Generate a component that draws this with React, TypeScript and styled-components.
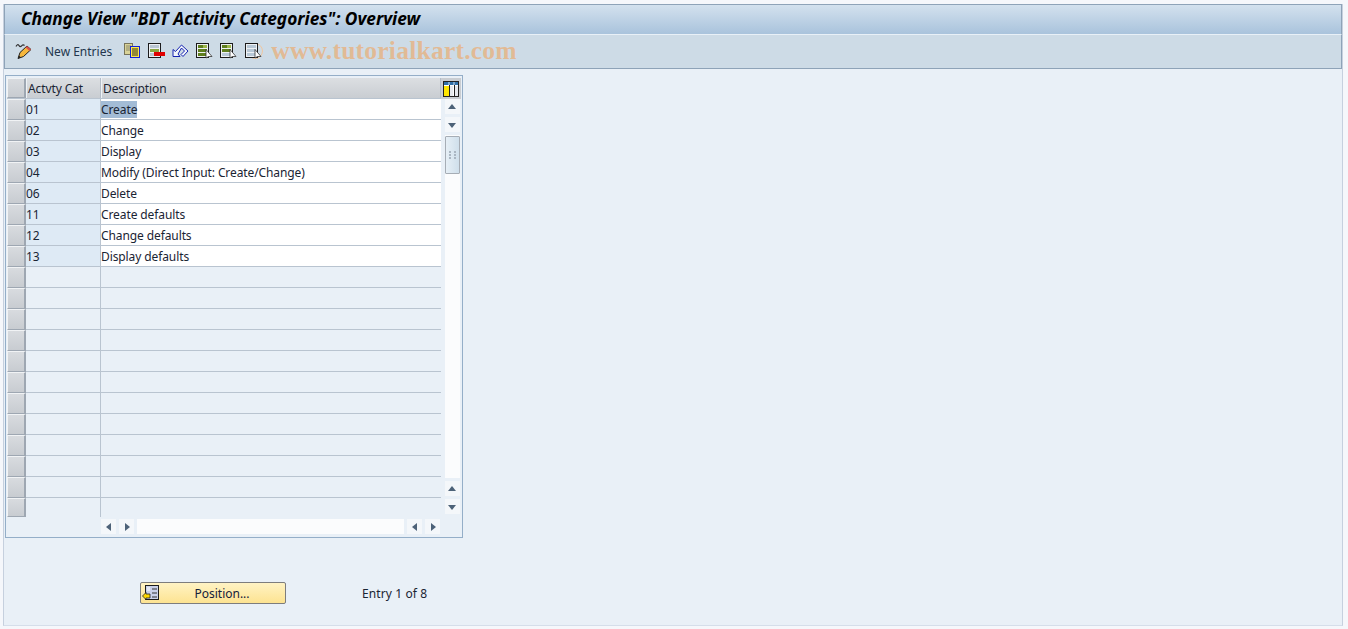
import React from 'react';
import styled, { createGlobalStyle } from 'styled-components';

const GlobalStyle = createGlobalStyle`
  html, body {
    margin: 0;
    padding: 0;
    background: #f5f7fb;
    overflow: hidden;
  }
`;

const Screen = styled.div`
  width: 1348px;
  height: 629px;
  box-sizing: border-box;
  padding: 4px 5px 4px 3px;
  font-family: "Noto Sans", "Liberation Sans", sans-serif;
  font-size: 12px;
  color: #1a2433;
`;
const Frame = styled.div`
  height: 100%;
  display: flex;
  flex-direction: column;
  background: #e9f0f7;
  border-right: 1px solid #c6d0de;
  border-left: 1px solid #c6d0de;
  border-bottom: 1px solid #d5deea;
`;
const TitleBar = styled.div`
  height: 31px;
  box-sizing: border-box;
  padding: 0 0 2px 16px;
  display: flex;
  align-items: center;
  border: 1px solid #8ea3b8;
  border-bottom: 1px solid #e8f0f7;
  background: linear-gradient(#d3e1ee, #a9c3dc);
`;
const Title = styled.h1`
  margin: 0;
  font-family: "Noto Sans", "Liberation Sans", sans-serif;
  font-size: 17.3px;
  font-weight: bold;
  font-style: italic;
  color: #000;
`;
const Toolbar = styled.div`
  height: 34px;
  box-sizing: border-box;
  padding: 0 0 1px 10px;
  display: flex;
  align-items: center;
  background: #cddbe6;
  border: 1px solid #8ea3b8;
  border-top: none;
`;
const ToolButton = styled.span<{ $gap?: number }>`
  display: flex;
  align-items: center;
  margin-right: ${props => props.$gap ?? 7}px;
  color: #23364d;
`;
const Watermark = styled.span`
  font-family: "Liberation Serif", serif;
  font-size: 25.6px;
  font-weight: bold;
  color: rgba(240, 165, 95, 0.6);
  letter-spacing: 0.2px;
  margin-left: 2px;
`;
const Content = styled.div`
  flex: 1;
  display: flex;
  flex-direction: column;
  padding: 6px 0 0 1px;
`;
const TableBox = styled.div`
  width: 458px;
  height: 463px;
  box-sizing: border-box;
  padding: 2px 2px 0 1px;
  border: 1px solid #94aec8;
  display: grid;
  grid-template-columns: 434px 20px;
  grid-template-rows: 21px 418px 20px;
  letter-spacing: -0.1px;
`;
const HeaderRow = styled.div`
  display: grid;
  grid-template-columns: 19px 75px 1fr;
  background: linear-gradient(#dcdfe2, #c9cdd2);
  border-bottom: 1px solid #b9c4d0;
`;
const HeaderCell = styled.div`
  padding-left: 1px;
  display: flex;
  align-items: center;
  border-left: 1px solid #eef2f6;
  border-right: 1px solid #b4bdc8;
`;
const Selector = styled.div`
  box-sizing: border-box;
  background: linear-gradient(#d8dbdf, #c8ccd1);
  border: 1px solid #f1f3f5;
  border-right: 2px solid #9ea7b2;
  border-bottom: 1px solid #9ea7b2;
`;
const ConfigButton = styled.div`
  display: flex;
  align-items: center;
  justify-content: center;
  background: #c9cdd2;
`;
const Rows = styled.div`
  display: flex;
  flex-direction: column;
`;
const Row = styled.div<{ $last?: boolean }>`
  height: ${props => (props.$last ? 19 : 21)}px;
  display: grid;
  grid-template-columns: 19px 75px 1fr;
`;
const KeyCell = styled.div<{ $filled: boolean; $last?: boolean }>`
  box-sizing: border-box;
  display: flex;
  align-items: center;
  background: ${props => (props.$filled ? '#deeaf5' : '#e9f0f7')};
  border-right: 1px solid #b9c4d0;
  border-bottom: ${props => (props.$last ? 'none' : '1px solid #b9c4d0')};
`;
const TextCell = styled.div<{ $filled: boolean; $last?: boolean }>`
  box-sizing: border-box;
  display: flex;
  align-items: center;
  background: ${props => (props.$filled ? '#fff' : '#e9f0f7')};
  border-bottom: ${props => (props.$last ? 'none' : '1px solid #b9c4d0')};
`;
const Marked = styled.span`
  background: #a3bcd6;
`;
const VerticalBar = styled.div`
  display: flex;
  flex-direction: column;
  align-items: center;
  padding: 0 1px 3px 3px;
`;
const ArrowButton = styled.div<{ $spaced?: boolean }>`
  width: 15px;
  height: 15px;
  flex: none;
  display: flex;
  align-items: center;
  justify-content: center;
  background: #f4f7fa;
  margin-top: ${props => (props.$spaced ? 3 : 0)}px;
`;
const VerticalTrack = styled.div`
  width: 15px;
  flex: 1;
  margin: 3px 0;
  background: #fbfcfd;
`;
const Thumb = styled.div`
  width: 15px;
  height: 38px;
  margin-top: 1px;
  box-sizing: border-box;
  display: flex;
  align-items: center;
  justify-content: center;
  background: linear-gradient(90deg, #e6eff6, #cfdfeb);
  border: 1px solid #a6adb5;
  border-radius: 1px;
`;
const HorizontalBar = styled.div`
  display: flex;
  align-items: center;
  gap: 3px;
  padding: 2px 1px 3px 94px;
`;
const HorizontalTrack = styled.div`
  height: 15px;
  flex: 1;
  background: #fbfcfd;
`;
const Footer = styled.div`
  display: flex;
  align-items: center;
  padding: 44px 0 0 135px;
`;
const PositionButton = styled.button`
  width: 146px;
  height: 22px;
  padding: 0 1px;
  display: flex;
  align-items: center;
  background: linear-gradient(#fff3c4, #fde391);
  border: 1px solid #7d7d7d;
  border-radius: 2px;
  font: inherit;
  color: #14213a;
`;
const PositionLabel = styled.span`
  flex: 1;
  text-align: center;
`;
const EntryCount = styled.span`
  margin-left: 76px;
  letter-spacing: 0.1px;
`;

const rows = [
  ['01', 'Create'],
  ['02', 'Change'],
  ['03', 'Display'],
  ['04', 'Modify (Direct Input: Create/Change)'],
  ['06', 'Delete'],
  ['11', 'Create defaults'],
  ['12', 'Change defaults'],
  ['13', 'Display defaults'],
  ...Array.from({ length: 12 }, () => ['', '']),
];

const Arrow = ({ dir }: { dir: 'up' | 'down' | 'left' | 'right' }) => {
  const points = {
    up: '1,7 9,7 5,2',
    down: '1,3 9,3 5,8',
    left: '7,1 7,9 2,5',
    right: '3,1 3,9 8,5',
  }[dir];
  return (
    <svg width="10" height="10" viewBox="0 0 10 10">
      <polygon points={points} fill="#4d6278" />
    </svg>
  );
};

const Pencil = () => (
  <svg width="18" height="17" viewBox="0 0 18 17">
    <path d="M3 15.5 L5 9.5 L12 3 L16 6.5 L8.5 13.5 Z" fill="#f6b73c" stroke="#222" strokeWidth="1" />
    <path d="M12 3 L16 6.5 L14.5 8 L10.5 4.4 Z" fill="#d9534f" />
    <path d="M3 15.5 L4 12.5 L6 14.4 Z" fill="#222" />
    <path d="M1 3.5 q1.5 -3 3 -1 q1 2 2.5 0.5 q1.5 -2 3 -0.5" stroke="#333" strokeWidth="1.2" fill="none" />
  </svg>
);

const CopyIcon = () => (
  <svg width="17" height="16" viewBox="0 0 17 16">
    <rect x="0.5" y="0.5" width="8" height="11" fill="#d9d398" stroke="#77745a" />
    <path d="M2 3h5M2 5h5M2 7h5" stroke="#8c8a6c" />
    <rect x="6.5" y="3.5" width="9" height="11" fill="#ffe94a" stroke="#1222d8" />
    <path d="M8 6h6M8 8h6M8 10h6M8 12h6" stroke="#2b2b20" strokeWidth="1" />
  </svg>
);

const DeleteIcon = () => (
  <svg width="17" height="16" viewBox="0 0 17 16">
    <rect x="0.5" y="0.5" width="12" height="14" fill="#eef1f4" stroke="#1c1c1c" />
    <rect x="2" y="2" width="9" height="3" fill="#b9c6d2" />
    <rect x="2" y="6" width="9" height="3" fill="#8aa542" />
    <rect x="2" y="10" width="5" height="3" fill="#b9c6d2" />
    <rect x="6" y="9" width="11" height="4" fill="#e00000" />
  </svg>
);

const UndoIcon = () => (
  <svg width="17" height="16" viewBox="0 0 17 16">
    <path
      d="M1 13.5 L1 6.5 L3.5 8.5 L9.5 2 L16 8 L11 13.5 L9 11.5 L12.5 8 L9.5 5 L6 11 L8 13.5 Z"
      fill="#f2f6fb"
      stroke="#1522b0"
      strokeWidth="1"
      strokeLinejoin="miter"
    />
  </svg>
);

const SelectIcon = ({ variant }: { variant: 'all' | 'block' | 'none' }) => {
  const green = '#5f7f1e';
  const pale = '#b8c8d6';
  const top = variant === 'none' ? pale : green;
  const middle = variant === 'none' ? pale : green;
  const bottom = variant === 'all' ? green : pale;
  return (
    <svg width="17" height="16" viewBox="0 0 17 16" style={{ overflow: 'visible' }}>
      {variant === 'none' && (
        <circle cx="10" cy="8" r="7.5" fill="none" stroke="#f0c7a0" strokeWidth="1" />
      )}
      <rect x="0.5" y="0.5" width="12" height="14" fill="#eef1f4" stroke="#1c1c1c" />
      <rect x="2" y="2" width="9" height="3" fill={top} />
      <rect x="2" y="6" width="9" height="3" fill={middle} />
      <rect x="2" y="10" width="9" height="3" fill={bottom} />
      <rect x="7" y="2" width="4" height="3" fill={variant === 'none' ? pale : '#9db84a'} />
      <path d="M10 6.5 L10 15 L12.5 13.5 L16 13.5 Z" fill="#fff" stroke="#333" strokeWidth="0.8" />
    </svg>
  );
};

const ColumnsIcon = () => (
  <svg width="16" height="16" viewBox="0 0 16 16">
    <rect x="0.5" y="0.5" width="15" height="15" fill="#fff" stroke="#222" />
    <rect x="1" y="1" width="14" height="3" fill="#2f6fa8" />
    <path d="M6 1v3M11 1v3" stroke="#cfe0ee" />
    <rect x="1" y="5" width="5" height="10" fill="#ffe600" />
    <rect x="7" y="5" width="3" height="10" fill="#e6e9ee" />
    <rect x="12" y="5" width="3" height="10" fill="#e6e9ee" />
    <path d="M6.5 4v11M11.5 4v11" stroke="#222" />
  </svg>
);

const GripIcon = () => (
  <svg width="7" height="8" viewBox="0 0 7 8">
    <path d="M0 0h2v2H0zM5 0h2v2H5zM0 3h2v2H0zM5 3h2v2H5zM0 6h2v2H0zM5 6h2v2H5z" fill="#aab6c2" />
  </svg>
);

const PositionIcon = () => (
  <svg width="18" height="17" viewBox="0 0 18 17">
    <rect x="3.5" y="0.5" width="13" height="14" fill="#c9d0e8" stroke="#1c1c1c" />
    <path d="M10 4h5M10 8h5M10 12h5" stroke="#333" strokeWidth="1" />
    <path d="M5 3 L8 3 M5 5 L8 5" stroke="#fff" strokeWidth="1" />
    <path d="M0.5 11 L4 7.5 L4 9 L8 9 L8 13 L4 13 L4 14.5 Z" fill="#ffd800" stroke="#222" strokeWidth="0.8" />
  </svg>
);

const App = () => {
  return (
    <Screen>
      <GlobalStyle />
      <Frame>
        <TitleBar>
          <Title>Change View "BDT Activity Categories": Overview</Title>
        </TitleBar>
        <Toolbar>
          <ToolButton $gap={12}><Pencil /></ToolButton>
          <ToolButton $gap={12}>New Entries</ToolButton>
          <ToolButton><CopyIcon /></ToolButton>
          <ToolButton><DeleteIcon /></ToolButton>
          <ToolButton><UndoIcon /></ToolButton>
          <ToolButton><SelectIcon variant="all" /></ToolButton>
          <ToolButton $gap={8}><SelectIcon variant="block" /></ToolButton>
          <ToolButton><SelectIcon variant="none" /></ToolButton>
          <Watermark>www.tutorialkart.com</Watermark>
        </Toolbar>
        <Content>
          <TableBox>
            <HeaderRow>
              <Selector />
              <HeaderCell>Actvty Cat</HeaderCell>
              <HeaderCell>Description</HeaderCell>
            </HeaderRow>
            <ConfigButton><ColumnsIcon /></ConfigButton>
            <Rows>
              {rows.map(([key, text], i) => {
                const last = i === rows.length - 1;
                return (
                  <Row key={i} $last={last}>
                    <Selector />
                    <KeyCell $filled={key !== ''} $last={last}>{key}</KeyCell>
                    <TextCell $filled={key !== ''} $last={last}>
                      {i === 0 ? <Marked>{text}</Marked> : text}
                    </TextCell>
                  </Row>
                );
              })}
            </Rows>
            <VerticalBar>
              <ArrowButton><Arrow dir="up" /></ArrowButton>
              <ArrowButton $spaced><Arrow dir="down" /></ArrowButton>
              <VerticalTrack>
                <Thumb><GripIcon /></Thumb>
              </VerticalTrack>
              <ArrowButton><Arrow dir="up" /></ArrowButton>
              <ArrowButton $spaced><Arrow dir="down" /></ArrowButton>
            </VerticalBar>
            <HorizontalBar>
              <ArrowButton><Arrow dir="left" /></ArrowButton>
              <ArrowButton><Arrow dir="right" /></ArrowButton>
              <HorizontalTrack />
              <ArrowButton><Arrow dir="left" /></ArrowButton>
              <ArrowButton><Arrow dir="right" /></ArrowButton>
            </HorizontalBar>
          </TableBox>
          <Footer>
            <PositionButton>
              <PositionIcon />
              <PositionLabel>Position...</PositionLabel>
            </PositionButton>
            <EntryCount>Entry 1 of 8</EntryCount>
          </Footer>
        </Content>
      </Frame>
    </Screen>
  );
};

export default App;
